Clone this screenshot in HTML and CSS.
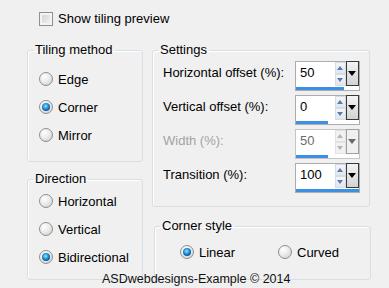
FILE: index.html
```html
<!DOCTYPE html>
<html lang="en">
<head>
  <meta charset="UTF-8">
  <title>Seamless Tiling</title>
  <link rel="stylesheet" href="styles.css">
</head>
<body>

  <div class="dialog">
    <label class="check"><span class="box"></span>Show tiling preview</label>

    <div class="columns">
      <div class="col-left">
        <fieldset class="group tiling">
          <legend>Tiling method</legend>
          <div class="options">
            <label class="opt"><span class="radio"></span>Edge</label>
            <label class="opt"><span class="radio on"></span>Corner</label>
            <label class="opt"><span class="radio"></span>Mirror</label>
          </div>
        </fieldset>

        <fieldset class="group direction">
          <legend>Direction</legend>
          <div class="options">
            <label class="opt"><span class="radio"></span>Horizontal</label>
            <label class="opt"><span class="radio"></span>Vertical</label>
            <label class="opt"><span class="radio on"></span>Bidirectional</label>
          </div>
        </fieldset>
      </div>

      <div class="col-right">
        <fieldset class="group settings">
          <legend>Settings</legend>
          <div class="rows">
            <div class="row">
              <span class="lbl">Horizontal offset (%):</span>
              <div class="spin">
                <div class="spin-top">
                  <span class="value">50</span>
                  <span class="arrows"><i class="up"></i><i class="down"></i></span>
                  <span class="drop"></span>
                </div>
                <div class="bar"><div class="fill" style="width: 48px"></div></div>
              </div>
            </div>
            <div class="row">
              <span class="lbl">Vertical offset (%):</span>
              <div class="spin">
                <div class="spin-top">
                  <span class="value">0</span>
                  <span class="arrows"><i class="up"></i><i class="down"></i></span>
                  <span class="drop"></span>
                </div>
                <div class="bar"><div class="fill" style="width: 32px"></div></div>
              </div>
            </div>
            <div class="row disabled">
              <span class="lbl">Width (%):</span>
              <div class="spin">
                <div class="spin-top">
                  <span class="value">50</span>
                  <span class="arrows"><i class="up"></i><i class="down"></i></span>
                  <span class="drop"></span>
                </div>
                <div class="bar"><div class="fill" style="width: 32px"></div></div>
              </div>
            </div>
            <div class="row">
              <span class="lbl">Transition (%):</span>
              <div class="spin">
                <div class="spin-top">
                  <span class="value">100</span>
                  <span class="arrows"><i class="up"></i><i class="down"></i></span>
                  <span class="drop"></span>
                </div>
                <div class="bar"><div class="fill" style="width: 63px"></div></div>
              </div>
            </div>
          </div>
        </fieldset>

        <fieldset class="group corner">
          <legend>Corner style</legend>
          <div class="inline-options">
            <label class="opt"><span class="radio on"></span>Linear</label>
            <label class="opt"><span class="radio"></span>Curved</label>
          </div>
        </fieldset>
      </div>
    </div>

    <div class="credit">ASDwebdesigns-Example © 2014</div>
  </div>

</body>
</html>
```

FILE: styles.css
```css
body {
  margin: 0;
  background: #f0f0f0;
  font-family: "Liberation Sans", Arial, sans-serif;
  font-size: 13px;
  color: #000;
}
.dialog {
  position: relative;
  width: 389px;
  height: 288px;
  padding-top: 11px;
  box-sizing: border-box;
}
.check {
  display: flex;
  align-items: center;
  height: 16px;
  line-height: 16px;
  margin-left: 39px;
}
.check .box {
  width: 14px;
  height: 14px;
  margin-right: 5px;
  box-sizing: border-box;
  border: 1px solid #8e8f8f;
  background: linear-gradient(135deg, #cfd0d2, #f6f6f6);
  box-shadow: inset 0 0 0 2px #f4f4f4;
}
.columns {
  display: flex;
  margin-top: 15px;
}
.col-left {
  margin-left: 27px;
  width: 116px;
}
.col-right {
  margin-left: 9px;
  width: 217px;
}
.group {
  margin: 0;
  padding: 0;
  min-width: 0;
  border: 1px solid #d5dfe5;
  border-radius: 3px;
  box-shadow: inset 1px 1px 0 #fff;
}
.group legend {
  margin-left: 5px;
  padding: 0 2px;
  line-height: 16px;
}
.options {
  display: flex;
  flex-direction: column;
  padding-left: 11px;
}
.opt {
  display: flex;
  align-items: center;
  height: 28px;
}
.radio {
  position: relative;
  width: 14px;
  height: 14px;
  margin-right: 5px;
  box-sizing: border-box;
  border: 1px solid #8e8f8f;
  border-radius: 50%;
  background: radial-gradient(circle at 35% 30%, #fff 0, #ececec 45%, #c9c9c9 100%);
}
.radio.on::after {
  content: "";
  position: absolute;
  left: 2px;
  top: 2px;
  width: 8px;
  height: 8px;
  border-radius: 50%;
  background: radial-gradient(circle at 45% 40%, #9ae6ff 0, #2d9fe3 35%, #0f5f9f 65%, #0b3866 100%);
}
.tiling .options {
  padding-top: 7px;
  padding-bottom: 12px;
}
.direction {
  margin-top: 9px;
}
.direction .options {
  padding-bottom: 8px;
}
.settings {
  width: 216px;
}
.rows {
  display: flex;
  flex-direction: column;
  gap: 4px;
  padding: 3px 9px 13px 10px;
}
.row {
  display: grid;
  grid-template-columns: 1fr 65px;
  height: 30px;
}
.lbl {
  line-height: 24px;
}
.spin {
  display: flex;
  flex-direction: column;
  width: 65px;
  height: 30px;
  box-sizing: border-box;
  border: 1px solid #abadb3;
  background: #fff;
}
.spin-top {
  display: flex;
  height: 24px;
}
.value {
  flex: 1;
  padding-left: 4px;
  line-height: 22px;
}
.arrows {
  display: flex;
  flex-direction: column;
  width: 11px;
}
.arrows i {
  position: relative;
  flex: 1;
  border: 1px solid #d6dce4;
  background: linear-gradient(#f4f6f9, #e1e6ee);
}
.arrows i::after {
  content: "";
  position: absolute;
  left: 1px;
  top: 3px;
  border-left: 3.5px solid transparent;
  border-right: 3.5px solid transparent;
}
.arrows .up::after {
  border-bottom: 4px solid #5b7aa8;
}
.arrows .down::after {
  border-top: 4px solid #5b7aa8;
}
.drop {
  position: relative;
  width: 13px;
  box-sizing: border-box;
  margin-top: -1px;
  border: 1px solid #3a3a3a;
  background: linear-gradient(#f4f4f4, #d3d3d3);
}
.drop::after {
  content: "";
  position: absolute;
  left: 1px;
  top: 9px;
  border-left: 4px solid transparent;
  border-right: 4px solid transparent;
  border-top: 5px solid #000;
}
.bar {
  height: 4px;
  padding-top: 1px;
  box-sizing: border-box;
}
.fill {
  height: 3px;
  background: #3b8fe4;
}
.disabled .lbl {
  color: #a3a3a3;
}
.disabled .value {
  color: #6d6d6d;
}
.disabled .spin {
  border-color: #c5c5c5;
}
.disabled .arrows i {
  border-color: #e2e2e2;
  background: #f1f1f1;
}
.disabled .arrows .up::after {
  border-bottom-color: #b4b4b4;
}
.disabled .arrows .down::after {
  border-top-color: #b4b4b4;
}
.disabled .drop {
  border-color: #a0a0a0;
  background: #f0f0f0;
}
.disabled .drop::after {
  border-top-color: #6a6a6a;
}
.corner {
  margin-top: 11px;
  margin-left: 2px;
  width: 215px;
}
.inline-options {
  display: grid;
  grid-template-columns: 98px 1fr;
  padding: 4px 0 13px 25px;
}
.credit {
  position: absolute;
  left: 102px;
  top: 272px;
  font-size: 12.5px;
  line-height: 15px;
  color: #111;
}
```
